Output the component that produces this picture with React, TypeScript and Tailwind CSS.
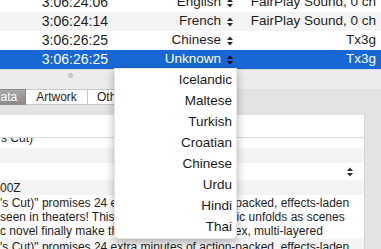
import React from "react";

const tracks = [
  { time: "3:06:24:06", lang: "English", codec: "FairPlay Sound, 0 ch", row: "bg-white" },
  { time: "3:06:24:14", lang: "French", codec: "FairPlay Sound, 0 ch", row: "bg-[#f4f4f4]" },
  { time: "3:06:26:25", lang: "Chinese", codec: "Tx3g", row: "bg-white" },
  { time: "3:06:26:25", lang: "Unknown", codec: "Tx3g", row: "bg-[#1767d4]", selected: true },
];

const languages = ["Icelandic", "Maltese", "Turkish", "Croatian", "Chinese", "Urdu", "Hindi", "Thai"];

const blurb = [
  "'s Cut)\" promises 24 extra minutes of action-packed, effects-laden",
  "seen in theaters! This extended cut of the epic unfolds as scenes",
  "c novel finally make the leap to film. A complex, multi-layered",
];

function Stepper({ className }: { className?: string }) {
  return (
    <svg width="6" height="10" viewBox="0 0 6 10" className={className}>
      <path d="M0 4 L3 0.5 L6 4 Z" fill="currentColor" />
      <path d="M0 6 L3 9.5 L6 6 Z" fill="currentColor" />
    </svg>
  );
}

export default function App() {
  return (
    <div className="relative w-[381px] h-[249px] overflow-hidden bg-[#ececec] font-['Liberation_Sans',Arial,sans-serif] text-[#1d1d1d]">
      {/* track table */}
      <div className="-mt-[7px] flex flex-col">
        {tracks.map((t, i) => (
          <div
            key={i}
            className={`flex items-center h-[19px] whitespace-nowrap ${t.row} ${t.selected ? "text-white" : ""}`}
          >
            <div className="w-[110px] pr-[2px] text-right text-[14px]">{t.time}</div>
            <div className="w-[111px] text-right text-[13.5px]">{t.lang}</div>
            <Stepper className={`ml-[6px] ${t.selected ? "text-black" : "text-[#2a2a2a]"}`} />
            <div className="flex-1 overflow-hidden pr-[5px] text-right text-[13.5px]">{t.codec}</div>
          </div>
        ))}
      </div>

      {/* split divider */}
      <div className="relative h-[23px] border-t border-[#dadada]">
        <div className="absolute left-[68px] top-[3px] w-[5px] h-[5px] rounded-full bg-[#cbcbcb] border border-[#bcbcbc]" />
      </div>

      {/* tab view */}
      <div className="bg-[#e3e3e3]">
        <div className="-mt-[3px] flex h-[16px] text-[12px] leading-[14px]">
          <div className="-ml-[17px] w-[43px] text-center text-white bg-gradient-to-b from-[#a8a8a8] to-[#8a8a8a] border border-[#8a8a8a]">
            Data
          </div>
          <div className="w-[62px] text-center bg-white border-y border-r border-[#c6c6c6]">Artwork</div>
          <div className="w-[48px] pl-[9px] bg-white border-y border-r border-[#c6c6c6]">Other</div>
        </div>
        <div className="h-[10px]" />

        <div className="mr-[16px] h-[134px] bg-white border-r border-[#d6d6d6] overflow-hidden">
          <div className="h-[23px] border-b border-[#d9d9d9]" />
          <div className="flex flex-col text-[12px] leading-[14px] whitespace-nowrap">
            <div className="h-[10px] overflow-hidden">
              <div className="-mt-[7px] pl-[1px]">s Cut)</div>
            </div>
            <div className="h-[15px] bg-[#f4f4f4]" />
            <div className="h-[17px] flex items-center justify-end pr-[11px]">
              <Stepper className="text-[#2a2a2a]" />
            </div>
            <div className="h-[15px] pt-[1px] bg-[#f4f4f4]">00Z</div>
            <div className="h-[43px] pt-[1px]">
              {blurb.map((line, i) => (
                <div key={i}>{line}</div>
              ))}
            </div>
            <div className="pt-[2px] bg-[#f4f4f4] h-[20px]">{blurb[0]}</div>
          </div>
        </div>
      </div>

      {/* language popup menu */}
      <div className="absolute left-[114px] top-[68px] w-[123px] pt-[1px] bg-white rounded-b-[5px] border border-black/10 shadow-[0_3px_10px_rgba(0,0,0,0.3)]">
        {languages.map((l) => (
          <div key={l} className="h-[21px] flex items-center justify-end pr-[4px] text-[13.5px] text-[#1a1a1a]">
            {l}
          </div>
        ))}
      </div>
    </div>
  );
}
